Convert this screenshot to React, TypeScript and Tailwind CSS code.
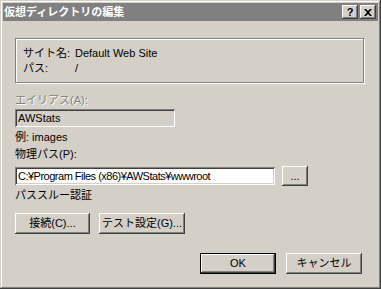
import React from "react";

const raised =
  "shadow-[inset_-1px_-1px_#404040,inset_1px_1px_#ffffff,inset_-2px_-2px_#808080,inset_2px_2px_#d4d0c8]";
const sunken =
  "shadow-[inset_1px_1px_#808080,inset_-1px_-1px_#ffffff,inset_2px_2px_#404040,inset_-2px_-2px_#d4d0c8]";

const Btn: React.FC<{ label: string; w: string; def?: boolean }> = ({ label, w, def }) => (
  <div
    className={`${w} h-[21px] flex items-center justify-center bg-[#d4d0c8] text-black ${
      def ? "border border-black" : ""
    }`}
  >
    <div className={`w-full h-full flex items-center justify-center ${raised}`}>{label}</div>
  </div>
);

const App: React.FC = () => {
  return (
    <div
      className="w-[381px] h-[289px] bg-[#d4d0c8] p-[3px] text-[11px] text-black leading-[13px] shadow-[inset_-1px_-1px_#404040,inset_1px_1px_#d4d0c8,inset_-2px_-2px_#808080,inset_2px_2px_#ffffff]"
      style={{ fontFamily: '"Liberation Sans", "Noto Sans CJK JP", sans-serif' }}
    >
      {/* title bar */}
      <div className="h-[18px] bg-[#808080] flex items-center justify-between pl-[1px] pr-[2px]">
        <span className="text-white font-bold text-[11px]">仮想ディレクトリの編集</span>
        <div className="flex gap-[2px]">
          <div className={`w-[16px] h-[14px] bg-[#d4d0c8] flex items-center justify-center font-bold text-[11px] ${raised}`}>?</div>
          <div className={`w-[16px] h-[14px] bg-[#d4d0c8] flex items-center justify-center ${raised}`}>
            <svg width="8" height="7" viewBox="0 0 8 7">
              <path d="M0 0h2l2 2 2-2h2L5 3.5 8 7H6L4 5 2 7H0l3-3.5z" fill="#000" />
            </svg>
          </div>
        </div>
      </div>

      <div className="pl-[12px]">
        {/* group box */}
        <div className="mt-[17px] w-[349px] h-[45px] border border-[#808080] shadow-[inset_1px_1px_#ffffff,1px_1px_#ffffff] pl-[7px] pt-[7px] leading-[15px]">
          <div className="flex">
            <span className="w-[52px]">サイト名:</span>
            <span>Default Web Site</span>
          </div>
          <div className="flex">
            <span className="w-[52px]">パス:</span>
            <span>/</span>
          </div>
        </div>

        <div className="mt-[11px] text-[#808080] [text-shadow:1px_1px_#ffffff]">エイリアス(A):</div>
        <div className={`mt-[2px] w-[160px] h-[18px] bg-[#d4d0c8] flex items-center pl-[3px] ${sunken}`}>AWStats</div>

        <div className="mt-[4px]">例: images</div>
        <div className="mt-[4px]">物理パス(P):</div>

        <div className="mt-[5px] flex items-center h-[20px]">
          <div className={`w-[260px] h-[18px] bg-white flex items-center pl-[3px] tracking-[-0.5px] ${sunken}`}>
            C:¥Program Files (x86)¥AWStats¥wwwroot
          </div>
          <div className={`ml-[7px] w-[26px] h-[20px] bg-[#d4d0c8] flex items-center justify-center ${raised}`}>...</div>
        </div>

        <div className="mt-[3px]">パススルー認証</div>

        <div className="mt-[11px] flex gap-[9px]">
          <Btn label="接続(C)..." w="w-[75px]" />
          <Btn label="テスト設定(G)..." w="w-[86px]" />
        </div>

        <div className="mt-[19px] flex justify-end gap-[10px] pr-[16px]">
          <Btn label="OK" w="w-[76px]" def />
          <Btn label="キャンセル" w="w-[76px]" />
        </div>
      </div>
    </div>
  );
};

export default App;
